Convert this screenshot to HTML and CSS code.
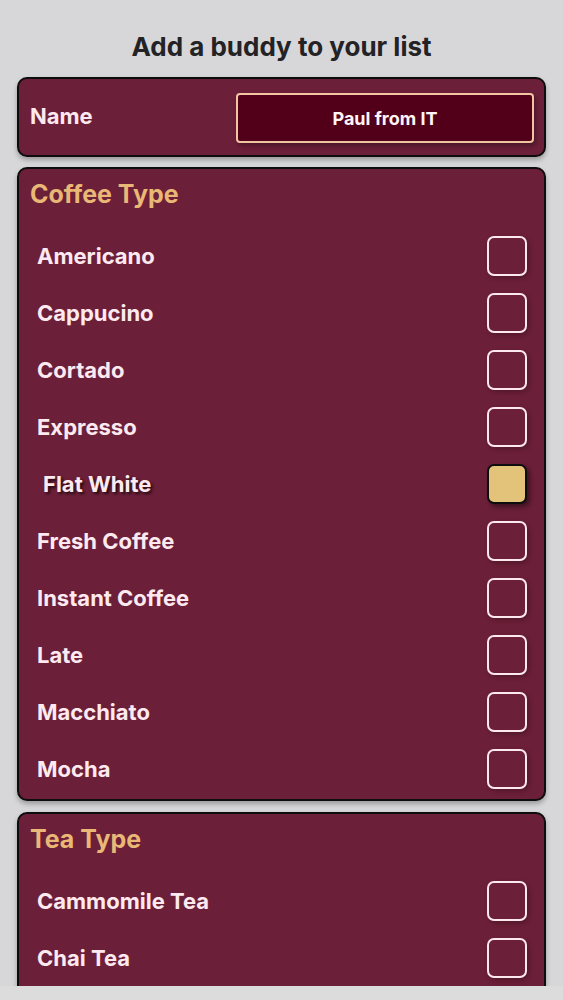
FILE: index.html
```html
<!DOCTYPE html>
<html>
<head>
<meta charset="utf-8">
<link rel="stylesheet" href="styles.css">
</head>
<body>
<div class="screen">
  <h1 class="title">Add a buddy to your list</h1>
  <div class="card name-card">
    <span class="name-label">Name</span>
    <div class="name-input">Paul from IT</div>
  </div>
  <div class="card">
    <div class="section-title">Coffee Type</div>
    <div class="rows">
      <div class="row"><span class="label">Americano</span><span class="box"></span></div>
      <div class="row"><span class="label">Cappucino</span><span class="box"></span></div>
      <div class="row"><span class="label">Cortado</span><span class="box"></span></div>
      <div class="row"><span class="label">Expresso</span><span class="box"></span></div>
      <div class="row selected"><span class="label">Flat White</span><span class="box"></span></div>
      <div class="row"><span class="label">Fresh Coffee</span><span class="box"></span></div>
      <div class="row"><span class="label">Instant Coffee</span><span class="box"></span></div>
      <div class="row"><span class="label">Late</span><span class="box"></span></div>
      <div class="row"><span class="label">Macchiato</span><span class="box"></span></div>
      <div class="row"><span class="label">Mocha</span><span class="box"></span></div>
    </div>
  </div>
  <div class="card tea-card">
    <div class="section-title">Tea Type</div>
    <div class="rows">
      <div class="row"><span class="label">Cammomile Tea</span><span class="box"></span></div>
      <div class="row"><span class="label">Chai Tea</span><span class="box"></span></div>
    </div>
  </div>
</div>
</body>
</html>
```
FILE: styles.css
```css
html, body {
  margin: 0;
  padding: 0;
  background: #dcdcdc;
}
body {
  font-family: Inter, "Noto Sans", "Liberation Sans", sans-serif;
  height: 1000px;
  overflow: hidden;
}
.screen {
  height: 986px;
  overflow: hidden;
  background: #d7d6d8;
  padding: 0 17px;
  box-sizing: border-box;
}
.title {
  margin: 0 0 14px;
  padding-top: 31px;
  line-height: 32px;
  font-size: 26px;
  font-weight: 700;
  color: #232326;
  text-align: center;
}
.card {
  background: #6c1f38;
  border: 2px solid #0d0d0d;
  border-radius: 10px;
  box-shadow: 0 3px 5px rgba(0, 0, 0, 0.28);
  padding: 0 11px 2px;
  margin-bottom: 11px;
}
.name-card {
  display: flex;
  align-items: center;
  justify-content: space-between;
  padding: 14px 10px 12px 11px;
  margin-bottom: 10px;
}
.name-label {
  color: #fde8ef;
  font-size: 22px;
  font-weight: 700;
  margin-top: -4px;
}
.name-input {
  width: 298px;
  height: 50px;
  box-sizing: border-box;
  border: 2px solid #f2c5a2;
  border-radius: 4px;
  background: #520019;
  color: #fff5f8;
  font-size: 18px;
  font-weight: 700;
  display: flex;
  align-items: center;
  justify-content: center;
  box-shadow: 2px 3px 4px rgba(0, 0, 0, 0.3);
}
.section-title {
  padding-top: 10px;
  line-height: 30px;
  font-size: 25px;
  font-weight: 700;
  color: #e9b776;
  margin-bottom: 18px;
}
.rows {
  padding: 0 6px 0 7px;
}
.tea-card {
  padding-bottom: 20px;
}
.row {
  height: 57px;
  display: flex;
  align-items: center;
  justify-content: space-between;
}
.label {
  color: #fdeaf0;
  font-size: 22px;
  font-weight: 700;
  margin-top: 1px;
}
.box {
  width: 40px;
  height: 40px;
  box-sizing: border-box;
  border: 2px solid #fde8ef;
  border-radius: 7px;
  box-shadow: 2px 2px 5px rgba(0, 0, 0, 0.25);
}
.selected .label {
  margin-left: 6px;
  text-shadow: 2px 2px 3px rgba(0, 0, 0, 0.7);
}
.selected .box {
  background: #e3c379;
  border-color: #0d0d0d;
  box-shadow: 3px 3px 5px rgba(0, 0, 0, 0.45);
}
```
